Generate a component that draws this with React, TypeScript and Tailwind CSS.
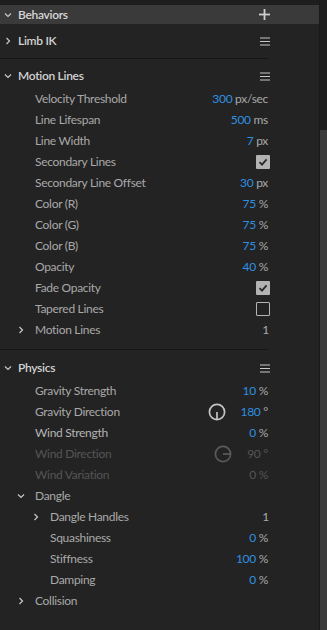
import React from 'react';

type Row =
  | { kind: 'prop'; label: string; value?: string; unit?: string; indent?: number; dim?: boolean; dial?: 'down' | 'right'; bright?: boolean }
  | { kind: 'check'; label: string; checked: boolean; indent?: number }
  | { kind: 'group'; label: string; open: boolean; indent: number; count?: string };

const Chevron = ({ open, className = '' }: { open: boolean; className?: string }) => (
  <svg width="8" height="8" viewBox="0 0 8 8" className={className}>
    {open ? (
      <polyline points="1,2.5 4,5.5 7,2.5" fill="none" stroke="currentColor" strokeWidth="1.2" />
    ) : (
      <polyline points="2.5,1 5.5,4 2.5,7" fill="none" stroke="currentColor" strokeWidth="1.2" />
    )}
  </svg>
);

const Menu = () => (
  <svg width="10" height="9" viewBox="0 0 10 9">
    <rect x="0" y="0.5" width="10" height="1" fill="#c8c8c8" />
    <rect x="0" y="4" width="10" height="1" fill="#c8c8c8" />
    <rect x="0" y="7.5" width="10" height="1" fill="#c8c8c8" />
  </svg>
);

const Dial = ({ dir, dim }: { dir: 'down' | 'right'; dim?: boolean }) => (
  <svg width="18" height="18" viewBox="0 0 18 18">
    <circle cx="9" cy="9" r="7.6" fill="none" stroke={dim ? '#5a5a5a' : '#c4c4c4'} strokeWidth="1.7" />
    {dir === 'down' ? (
      <line x1="9" y1="9" x2="9" y2="16" stroke={dim ? '#5a5a5a' : '#c4c4c4'} strokeWidth="1.7" />
    ) : (
      <line x1="9" y1="9" x2="16" y2="9" stroke={dim ? '#5a5a5a' : '#c4c4c4'} strokeWidth="1.7" />
    )}
  </svg>
);

const Checkbox = ({ checked }: { checked: boolean }) =>
  checked ? (
    <div className="w-[14px] h-[14px] rounded-[1px] bg-[#b3b3b3] flex items-center justify-center">
      <svg width="10" height="10" viewBox="0 0 10 10">
        <polyline points="1.5,5.2 4,7.6 8.6,2.4" fill="none" stroke="#2a2a2a" strokeWidth="1.8" />
      </svg>
    </div>
  ) : (
    <div className="w-[14px] h-[14px] rounded-[1px] border-[1.5px] border-[#b3b3b3]" />
  );

const motionLines: Row[] = [
  { kind: 'prop', label: 'Velocity Threshold', value: '300', unit: 'px/sec' },
  { kind: 'prop', label: 'Line Lifespan', value: '500', unit: 'ms' },
  { kind: 'prop', label: 'Line Width', value: '7', unit: 'px' },
  { kind: 'check', label: 'Secondary Lines', checked: true },
  { kind: 'prop', label: 'Secondary Line Offset', value: '30', unit: 'px' },
  { kind: 'prop', label: 'Color (R)', value: '75', unit: '%' },
  { kind: 'prop', label: 'Color (G)', value: '75', unit: '%' },
  { kind: 'prop', label: 'Color (B)', value: '75', unit: '%' },
  { kind: 'prop', label: 'Opacity', value: '40', unit: '%' },
  { kind: 'check', label: 'Fade Opacity', checked: true },
  { kind: 'check', label: 'Tapered Lines', checked: false },
  { kind: 'group', label: 'Motion Lines', open: false, indent: 0, count: '1' },
];

const physics: Row[] = [
  { kind: 'prop', label: 'Gravity Strength', value: '10', unit: '%' },
  { kind: 'prop', label: 'Gravity Direction', value: '180', unit: '°', dial: 'down' },
  { kind: 'prop', label: 'Wind Strength', value: '0', unit: '%', bright: true },
  { kind: 'prop', label: 'Wind Direction', value: '90', unit: '°', dial: 'right', dim: true },
  { kind: 'prop', label: 'Wind Variation', value: '0', unit: '%', dim: true },
  { kind: 'group', label: 'Dangle', open: true, indent: 0 },
  { kind: 'group', label: 'Dangle Handles', open: false, indent: 1, count: '1' },
  { kind: 'prop', label: 'Squashiness', value: '0', unit: '%', indent: 1 },
  { kind: 'prop', label: 'Stiffness', value: '100', unit: '%', indent: 1 },
  { kind: 'prop', label: 'Damping', value: '0', unit: '%', indent: 1 },
  { kind: 'group', label: 'Collision', open: false, indent: 0 },
];

function RowView({ row }: { row: Row }) {
  const indent = (row as any).indent ? 15 : 0;
  if (row.kind === 'group') {
    return (
      <div className="h-[21px] flex items-center w-[270px]" style={{ paddingLeft: 17 + indent }}>
        <Chevron open={row.open} className="text-[#c8c8c8] mr-[10px]" />
        <span className="text-[#a9a9a9] flex-1">{row.label}</span>
        {row.count && <span className="text-[#a9a9a9] pr-[1px]">{row.count}</span>}
      </div>
    );
  }
  if (row.kind === 'check') {
    return (
      <div className="h-[21px] flex items-center w-[270px] pl-[35px]">
        <span className="text-[#a9a9a9] flex-1">{row.label}</span>
        <Checkbox checked={row.checked} />
      </div>
    );
  }
  const labelColor = row.dim ? 'text-[#555555]' : row.bright ? 'text-[#b5b5b5]' : 'text-[#a9a9a9]';
  return (
    <div className="h-[21px] flex items-center w-[270px]" style={{ paddingLeft: 35 + indent }}>
      <span className={`${labelColor} flex-1`}>{row.label}</span>
      {row.dial && (
        <div className="w-[18px] h-[18px] mr-[15px]">
          <Dial dir={row.dial} dim={row.dim} />
        </div>
      )}
      <span className="pr-[2px] whitespace-pre">
        <span className={row.dim ? 'text-[#555555]' : 'text-[#2f8fe0]'}>{row.value}</span>
        <span className={row.dim ? 'text-[#555555]' : 'text-[#a9a9a9]'}> {row.unit}</span>
      </span>
    </div>
  );
}

function SectionHeader({ label, open }: { label: string; open: boolean }) {
  return (
    <div className="h-[24px] flex items-center w-[270px] pl-[4px]">
      <Chevron open={open} className="text-[#c8c8c8] mr-[6px]" />
      <span className="text-[#d2d2d2] font-semibold flex-1">{label}</span>
      <Menu />
    </div>
  );
}

export default function App() {
  return (
    <div className="w-[327px] h-[630px] bg-[#232323] flex overflow-hidden font-['Lato',sans-serif] text-[12px] tracking-[-0.3px] leading-none">
      <div className="flex-1 flex flex-col">
        <div className="h-[5px] bg-[#1e1e1e]" />
        <div className="h-[19px] bg-[#3a3a3a] flex items-center pl-[4px] pr-[49px]">
          <Chevron open className="text-[#c8c8c8] mr-[6px]" />
          <span className="text-[#d6d6d6] font-semibold flex-1">Behaviors</span>
          <svg width="11" height="11" viewBox="0 0 11 11">
            <rect x="4.6" y="0" width="1.8" height="11" fill="#d0d0d0" />
            <rect x="0" y="4.6" width="11" height="1.8" fill="#d0d0d0" />
          </svg>
        </div>

        <div className="pt-[5px] pb-[5px] w-[268px] border-b border-[#151515]">
          <div className="h-[24px] flex items-center w-[270px] pl-[4px]">
            <Chevron open={false} className="text-[#c8c8c8] mr-[6px]" />
            <span className="text-[#d2d2d2] font-semibold flex-1">Limb IK</span>
            <Menu />
          </div>
        </div>

        <div className="pt-[5px] pb-[9px] w-[268px] border-b border-[#151515]">
          <SectionHeader label="Motion Lines" open />
          {motionLines.map((r, i) => (
            <RowView key={i} row={r} />
          ))}
        </div>

        <div className="pt-[6px]">
          <SectionHeader label="Physics" open />
          {physics.map((r, i) => (
            <RowView key={i} row={r} />
          ))}
        </div>
      </div>
      <div className="w-[8px] flex flex-col border-l border-[#1a1a1a]">
        <div className="h-[130px] bg-[#1e1e1e]" />
        <div className="flex-1 bg-[#3b3b3b]" />
      </div>
    </div>
  );
}
